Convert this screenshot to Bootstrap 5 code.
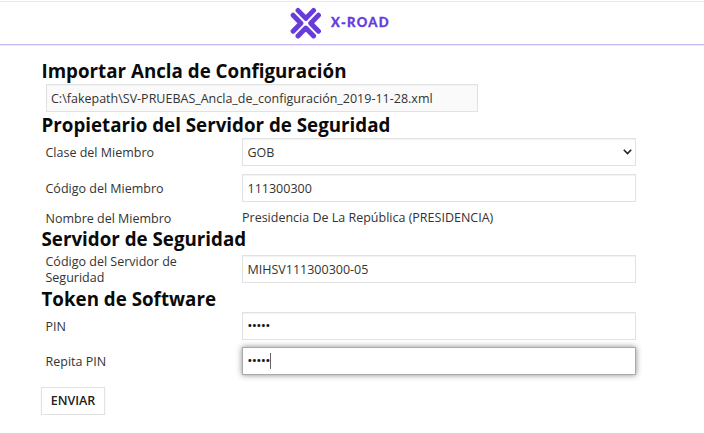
<!DOCTYPE html>
<html lang="es">
<head>
<meta charset="utf-8">
<meta name="viewport" content="width=device-width, initial-scale=1">
<title>X-Road</title>
<link href="https://cdn.jsdelivr.net/npm/bootstrap@5.3.0/dist/css/bootstrap.min.css" rel="stylesheet">
<style>
body{font-family:"Open Sans",sans-serif;font-size:12.5px;line-height:16px;color:#333;overflow:hidden}
.topbar{height:44px;border-top:1px solid #e9e9e9;margin:1px 0;border-bottom:1px solid #c6b9f0;padding-left:290px;box-shadow:0 1px 0 #eeeafb}
.brand-text{font-family:Lato,sans-serif;font-weight:900;font-size:13px;letter-spacing:1.35px;color:#663cdc;margin-left:9px;padding-bottom:2px;-webkit-text-stroke:.3px #663cdc}
.page{padding:12px 0 0 41px;width:636px}
.section-title{font-size:18.75px;font-weight:700;line-height:26px;height:26px;margin:0;color:#0a0a0a;white-space:nowrap;padding-left:.5px}
.label-col{width:201px;padding:1px 20px 0 4.5px;margin-bottom:-1px;flex:none}
.field{font-size:12.5px;line-height:16px;color:#333;border:1px solid #e2e2e2;border-radius:0;padding:0 4.5px;height:28px;min-height:0;box-shadow:inset 0 1px 1px #f2f2f2;background-color:#fff}
.field.active-field{border-color:#aaa;box-shadow:0 0 6px #888}
.anchor-file,.anchor-file:disabled{width:432px;margin-left:5px;padding-left:4px;background:#fafafa}
.class-select{background-image:none;padding-top:1px}
.arrow{right:4px;top:11px}
.dots{font-size:12.5px;letter-spacing:-.2px;color:#111;-webkit-text-stroke:.2px #111}
.caret{width:1px;height:16px;background:#666}
.row-tall{padding:1px 0}
.row-pin{margin-top:7px}
.send{font-size:12.5px;font-weight:600;line-height:16px;width:64px;height:28px;padding:0;margin-top:12px;border:1px solid #e2e2e2;border-radius:0;background:#fff;color:#222;box-shadow:0 1px 2px #eee}
</style>
<script src="https://cdn.jsdelivr.net/npm/bootstrap@5.3.0/dist/js/bootstrap.bundle.min.js"></script>
</head>
<body class="bg-white">
<header class="topbar d-flex align-items-center">
<svg width="32" height="32" viewBox="0 0 32 32" fill="none" stroke="#663cdc" stroke-width="4.9" stroke-linecap="round" stroke-linejoin="round"><path d="M8 3.4l7.8 8L23.6 3.4M8 29l7.8-8 7.8 8M3.1 8.2l7.8 8-7.8 8M28.5 8.2l-7.8 8 7.8 8"/></svg>
<span class="brand-text">X-ROAD</span>
</header>
<main class="page">
<h2 class="section-title">Importar Ancla de Configuración</h2>
<input class="form-control field anchor-file" aria-label="Archivo" disabled value="C:\fakepath\SV-PRUEBAS_Ancla_de_configuración_2019-11-28.xml">
<h2 class="section-title">Propietario del Servidor de Seguridad</h2>
<div class="d-flex align-items-center"><label class="label-col" for="clase">Clase del Miembro</label>
<div class="position-relative flex-grow-1"><select id="clase" class="form-select field class-select"><option>GOB</option></select>
<svg class="arrow position-absolute" width="9" height="6" viewBox="0 0 9 6" fill="none" stroke="#222" stroke-width="1.6"><path d="M.8.8l3.7 3.7L8.2.8"/></svg></div></div>
<div class="d-flex align-items-center mt-2"><label class="label-col" for="codigo">Código del Miembro</label><input id="codigo" class="form-control field" value="111300300"></div>
<div class="d-flex mt-2"><span class="label-col">Nombre del Miembro</span><span>Presidencia De La República (PRESIDENCIA)</span></div>
<h2 class="section-title">Servidor de Seguridad</h2>
<div class="d-flex align-items-center row-tall"><label class="label-col" for="servidor">Código del Servidor de Seguridad</label><input id="servidor" class="form-control field" value="MIHSV111300300-05"></div>
<h2 class="section-title">Token de Software</h2>
<div class="d-flex align-items-center"><span class="label-col">PIN</span><div class="form-control field d-flex align-items-center"><span class="dots">•••••</span></div></div>
<div class="d-flex align-items-center row-pin"><span class="label-col">Repita PIN</span><div class="form-control field active-field d-flex align-items-center"><span class="dots">•••••</span><span class="caret"></span></div></div>
<button type="button" class="btn send">ENVIAR</button>
</main>
</body>
</html>
